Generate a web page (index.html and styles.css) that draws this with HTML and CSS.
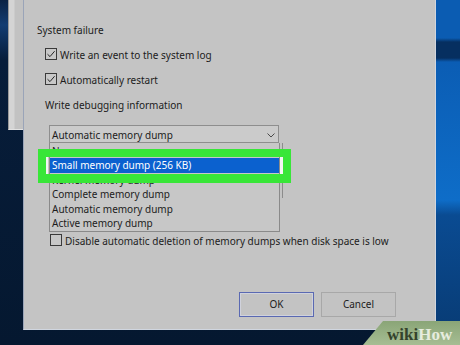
FILE: index.html
```html
<!doctype html>
<html><head>
  <title>Startup and Recovery</title>
  <meta charset="utf-8">
  <link rel="stylesheet" href="styles.css">
</head><body>
<div class="desktop">
  <div class="back-window"></div>

  <div class="dialog">
    <div class="group-label">System failure</div>
    <label class="check">
      <span class="box"><svg width="10" height="10" viewBox="0 0 10 10"><path d="M1.5 5.2 L4 7.6 L8.6 2.2" fill="none" stroke="#262626" stroke-width="1"/></svg></span>
      Write an event to the system log
    </label>
    <label class="check">
      <span class="box"><svg width="10" height="10" viewBox="0 0 10 10"><path d="M1.5 5.2 L4 7.6 L8.6 2.2" fill="none" stroke="#262626" stroke-width="1"/></svg></span>
      Automatically restart
    </label>
    <div class="sub-label">Write debugging information</div>

    <div class="combo-wrap">
      <div class="combo">
        <span>Automatic memory dump</span>
        <svg class="chevron" width="8" height="5" viewBox="0 0 8 5"><path d="M0.5 0.5 L4 4 L7.5 0.5" fill="none" stroke="#4a4a4a" stroke-width="1"/></svg>
      </div>
      <div class="dump-field"></div>
      <ul class="dropdown">
        <li>None</li>
        <li class="selected">Small memory dump (256 KB)</li>
        <li>Kernel memory dump</li>
        <li>Complete memory dump</li>
        <li>Automatic memory dump</li>
        <li>Active memory dump</li>
      </ul>
    </div>

    <label class="check disable">
      <span class="box"></span>
      Disable automatic deletion of memory dumps when disk space is low
    </label>

    <div class="buttons">
      <button class="btn default">OK</button>
      <button class="btn">Cancel</button>
    </div>

    <div class="callout"></div>
  </div>

  <div class="wikihow"><span class="wiki">wiki</span><span class="how">How</span></div>
</div>
</body></html>
```

FILE: styles.css
```css
body {
    margin: 0;
    font: 10px/15px 'Noto Sans', 'Open Sans', sans-serif;
    color: #1c1c1c;
}

.desktop {
    position: relative;
    width: 460px;
    height: 345px;
    overflow: hidden;
    background:
        linear-gradient(to bottom, #0b5cb2 0, #0b5cb2 38px, #062f60 42px, #062f60 58px, #0b5db4 62px, #0e6dc8 200px, #0a4b92 215px, #083a72 345px) right top / 30px 100% no-repeat,
        linear-gradient(to bottom, #0a2244 0, #123c72 25px, #071d3a 60px, #051830 100%);
}

.back-window {
    position: absolute;
    left: 8px;
    top: 0;
    width: 15px;
    height: 130px;
    box-sizing: border-box;
    background: linear-gradient(to right, #d4d4d4 0, #d4d4d4 5px, #c2c2c2 6px);
    border-left: 1px solid #9a9a9a;
    border-bottom: 1px solid #e2e2e2;
}

.dialog {
    position: absolute;
    left: 23px;
    top: 0;
    width: 413px;
    height: 330px;
    box-sizing: border-box;
    display: flex;
    flex-direction: column;
    background: #c4c4c4;
    border: 1px solid #9aa4b8;
    border-top: none;
    border-right-color: #d2d6de;
    border-bottom-color: #d0d6e0;
    padding-top: 17.5px;
}

.group-label {
    margin-left: 13px;
    line-height: 25px;
}

.sub-label {
    margin-left: 21px;
    line-height: 25px;
}

.check {
    display: flex;
    align-items: center;
    margin-left: 21px;
    line-height: 25px;
}

.box {
    width: 12px;
    height: 12px;
    box-sizing: border-box;
    border: 1px solid #3a3a3a;
    margin: 0 3px 2px 0;
    display: flex;
    align-items: center;
    justify-content: center;
    background: #c8c8c8;
}

.combo-wrap {
    position: relative;
    margin: 7.5px 0 0 25px;
    width: 234px;
}

.combo {
    width: 230px;
    height: 18px;
    box-sizing: border-box;
    border: 1px solid #8e8e8e;
    background: #cbcbcb;
    padding: 1px 0 0 2px;
    line-height: 16px;
    display: flex;
    justify-content: space-between;
    align-items: flex-start;
}

.chevron {
    margin: 6px 3px 0 0;
}

.dump-field {
    height: 55px;
    border-right: 1px solid #8c8c8c;
}

.dropdown {
    position: absolute;
    left: 0;
    top: 18px;
    width: 231px;
    height: 89px;
    box-sizing: border-box;
    margin: 0;
    padding: 0.5px 0 0;
    list-style: none;
    overflow: hidden;
    background: #c7c7c7;
    border: 1px solid #8a8a8a;
    border-top: none;
}

.dropdown li {
    height: 14.6px;
    line-height: 14.6px;
    padding-left: 2px;
    white-space: nowrap;
}

.dropdown li.selected {
    background: #0b61cf;
    color: #fff;
}

.disable {
    margin: 30.5px 0 0 26px;
}

.buttons {
    margin-top: auto;
    display: flex;
    justify-content: flex-end;
    gap: 7px;
    padding: 0 39px 12px 0;
}

.btn {
    width: 75px;
    height: 25px;
    box-sizing: border-box;
    font: inherit;
    color: #1c1c1c;
    background: #c3c3c3;
    border: 1px solid #a8a8a8;
    padding: 0;
}

.btn.default {
    border-color: #5a69b2;
    box-shadow: inset 0 0 0 1px #d0d2dc;
}

.callout {
    position: absolute;
    left: 14px;
    top: 149px;
    width: 253px;
    height: 34px;
    box-sizing: border-box;
    border: 8px solid #38e638;
    border-bottom-width: 9px;
    box-shadow: inset 2px 0 0 #f4f4f4, inset -3px 0 0 #f4f4f4;
}

.wikihow {
    position: absolute;
    right: 0;
    bottom: 0;
    width: 97px;
    height: 24px;
    box-sizing: border-box;
    padding: 2px 0 0 24px;
    clip-path: polygon(20px 0, 100% 0, 100% 100%, 0 100%);
    background: linear-gradient(to bottom, #8aa577, #a6bd93);
    font: bold 17px/24px 'Liberation Serif', serif;
    display: flex;
}

.wiki {
    color: #34432c;
}

.how {
    color: #e6ecde;
}
```
